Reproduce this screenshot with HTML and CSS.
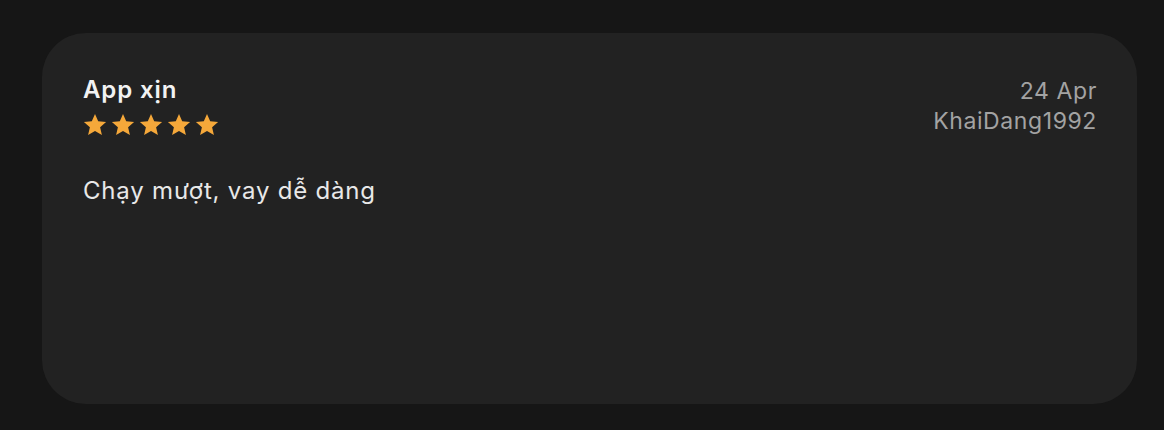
FILE: index.html
```html
<!DOCTYPE html>
<html lang="vi">
<head>
<meta charset="utf-8">
<link rel="stylesheet" href="styles.css">
</head>
<body>
<div class="card">
  <div class="head">
    <div class="left">
      <div class="title">App xịn</div>
      <div class="stars">
        <svg viewBox="0 0 24 24"><path d="M12 1l3.2 7.3 7.9.7-6 5.2 1.8 7.8L12 17.9 5.1 22l1.8-7.8-6-5.2 7.9-.7z"/></svg>
        <svg viewBox="0 0 24 24"><path d="M12 1l3.2 7.3 7.9.7-6 5.2 1.8 7.8L12 17.9 5.1 22l1.8-7.8-6-5.2 7.9-.7z"/></svg>
        <svg viewBox="0 0 24 24"><path d="M12 1l3.2 7.3 7.9.7-6 5.2 1.8 7.8L12 17.9 5.1 22l1.8-7.8-6-5.2 7.9-.7z"/></svg>
        <svg viewBox="0 0 24 24"><path d="M12 1l3.2 7.3 7.9.7-6 5.2 1.8 7.8L12 17.9 5.1 22l1.8-7.8-6-5.2 7.9-.7z"/></svg>
        <svg viewBox="0 0 24 24"><path d="M12 1l3.2 7.3 7.9.7-6 5.2 1.8 7.8L12 17.9 5.1 22l1.8-7.8-6-5.2 7.9-.7z"/></svg>
      </div>
    </div>
    <div class="right">
      <div class="meta">24 Apr</div>
      <div class="meta">KhaiDang1992</div>
    </div>
  </div>
  <p class="body">Chạy mượt, vay dễ dàng</p>
</div>
</body>
</html>
```
FILE: styles.css
```css
html, body { margin: 0; padding: 0; }
body {
  background: #161616;
  width: 1164px;
  height: 430px;
  font-family: Inter, "Noto Sans", sans-serif;
  padding: 33px 27px 0 42px;
  box-sizing: border-box;
}
.card {
  background: #222222;
  border-radius: 44px;
  height: 371px;
  box-sizing: border-box;
  padding: 43px 40px 0 41px;
}
.head { display: flex; justify-content: space-between; align-items: flex-start; }
.title { color: #f2f2f2; font-size: 24px; font-weight: 600; line-height: 28px; letter-spacing: 0.9px; }
.stars { display: flex; gap: 4px; margin-top: 9px; }
.stars svg { width: 24px; height: 24px; fill: #f5a83a; }
.right { text-align: right; padding-top: 0; }
.meta { color: #a3a3a3; font-size: 23px; line-height: 30px; letter-spacing: 0.6px; }
.body { color: #e8e8e8; font-size: 24px; line-height: 28px; margin: 40px 0 0; letter-spacing: 0.8px; }
```
